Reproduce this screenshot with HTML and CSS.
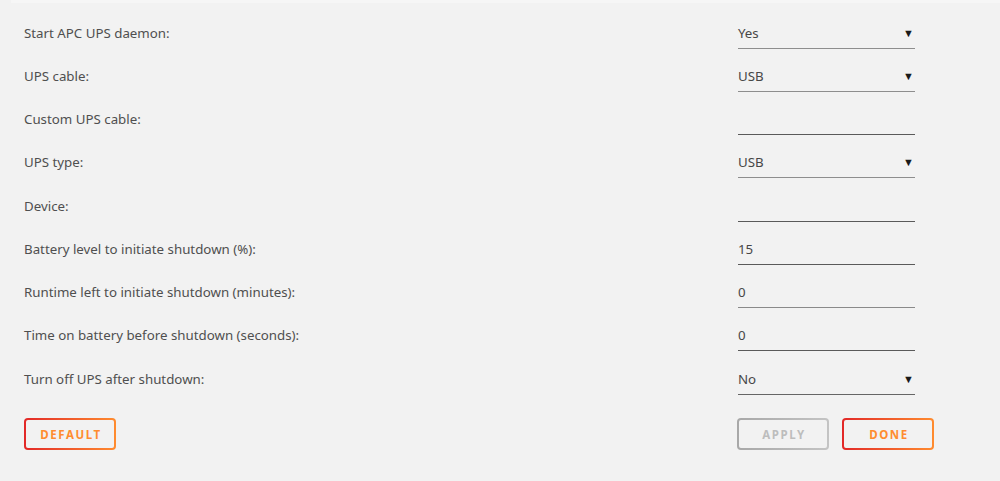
FILE: index.html
```html
<!DOCTYPE html>
<html lang="en">
<head>
<meta charset="utf-8">
<title>APC UPS Daemon Settings</title>
<link rel="stylesheet" href="styles.css">
</head>
<body>
<div class="top-strip"></div>
<form class="settings">
  <div class="row">
    <label class="label">Start APC UPS daemon:</label>
    <div class="field select"><span class="value">Yes</span><span class="caret">&#9660;</span></div>
  </div>
  <div class="row">
    <label class="label">UPS cable:</label>
    <div class="field select"><span class="value">USB</span><span class="caret">&#9660;</span></div>
  </div>
  <div class="row">
    <label class="label">Custom UPS cable:</label>
    <div class="field text"><span class="value"></span></div>
  </div>
  <div class="row">
    <label class="label">UPS type:</label>
    <div class="field select"><span class="value">USB</span><span class="caret">&#9660;</span></div>
  </div>
  <div class="row">
    <label class="label">Device:</label>
    <div class="field text"><span class="value"></span></div>
  </div>
  <div class="row">
    <label class="label">Battery level to initiate shutdown (%):</label>
    <div class="field text"><span class="value">15</span></div>
  </div>
  <div class="row">
    <label class="label">Runtime left to initiate shutdown (minutes):</label>
    <div class="field text light"><span class="value">0</span></div>
  </div>
  <div class="row">
    <label class="label">Time on battery before shutdown (seconds):</label>
    <div class="field text"><span class="value">0</span></div>
  </div>
  <div class="row">
    <label class="label">Turn off UPS after shutdown:</label>
    <div class="field select dark"><span class="value">No</span><span class="caret">&#9660;</span></div>
  </div>
  <div class="actions">
    <button type="button" class="btn">Default</button>
    <div class="actions-right">
      <button type="button" class="btn disabled">Apply</button>
      <button type="button" class="btn">Done</button>
    </div>
  </div>
</form>
</body>
</html>
```

FILE: styles.css
```css
* {
  box-sizing: border-box;
}

html, body {
  margin: 0;
  padding: 0;
  background: #f2f2f2;
}

body {
  font-family: "Noto Sans", "Open Sans", "Liberation Sans", sans-serif;
  font-size: 13.3px;
  color: #4f4f4f;
  width: 1000px;
  height: 481px;
  overflow: hidden;
}

.top-strip {
  height: 3px;
  margin-left: 11px;
  background: #f6f6f6;
}

.settings {
  padding: 9px 0 0 24px;
}

.row {
  display: grid;
  grid-template-columns: 714px 177px;
  align-items: center;
  height: 43.25px;
}

.label {
  line-height: 18px;
  padding-bottom: 2px;
}

.field {
  display: flex;
  align-items: center;
  justify-content: space-between;
  height: 30px;
  padding-bottom: 1px;
  border-bottom: 1px solid #5a5a5a;
}

.field .value {
  color: #474747;
  line-height: 18px;
}

.field.select {
  border-bottom-color: #8e8e8e;
}

.field.light {
  border-bottom-color: #8a8a8a;
}

.field.select.dark {
  border-bottom-color: #666;
}

.caret {
  font-size: 11px;
  color: #1a1a1a;
  margin-right: 1px;
  line-height: 10px;
}

.actions {
  display: flex;
  justify-content: space-between;
  width: 910px;
  margin-top: 17px;
}

.actions-right {
  display: flex;
  gap: 13px;
}

.btn {
  width: 92px;
  height: 32px;
  border: 2px solid transparent;
  border-radius: 4px;
  background:
    linear-gradient(#f2f2f2, #f2f2f2) padding-box,
    linear-gradient(90deg, #e22828, #ff8c2f) border-box;
  color: #ff8c2f;
  font-family: "Noto Sans", "Open Sans", "Liberation Sans", sans-serif;
  font-weight: 700;
  font-size: 11.5px;
  letter-spacing: 1.6px;
  text-transform: uppercase;
  padding: 0 0 0 2px;
  cursor: pointer;
}

.btn.disabled {
  background:
    linear-gradient(#f2f2f2, #f2f2f2) padding-box,
    linear-gradient(90deg, #a8a8a8, #c4c4c4) border-box;
  color: #bdbdbd;
  cursor: default;
}
```
